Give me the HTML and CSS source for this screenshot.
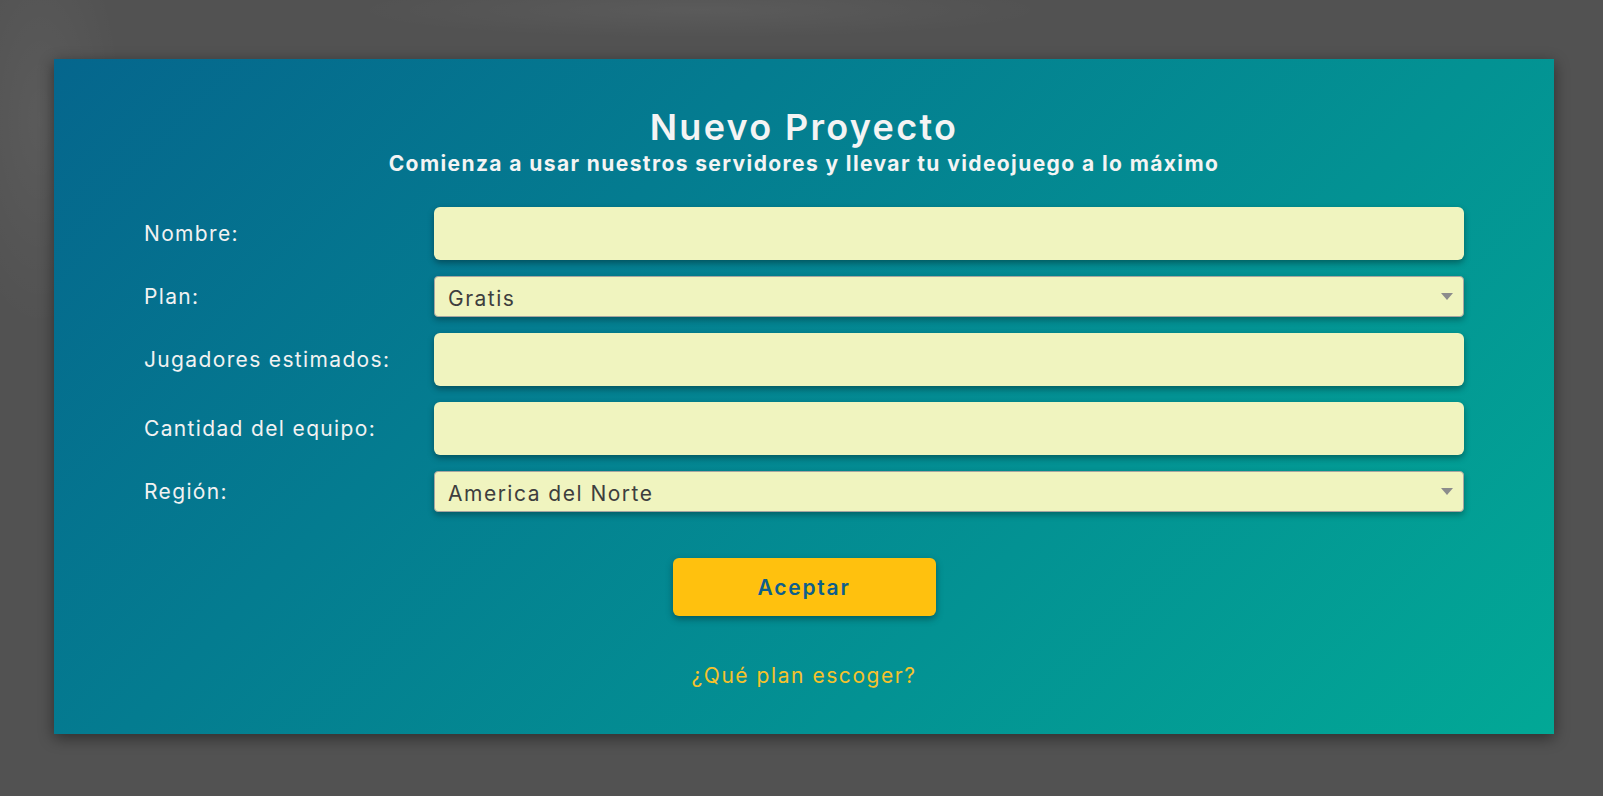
FILE: index.html
```html
<!DOCTYPE html>
<html lang="es">
<head>
<meta charset="utf-8">
<title>Nuevo Proyecto</title>
<link rel="stylesheet" href="styles.css">
</head>
<body>
<main class="page">
  <section class="card">
    <header class="card-head">
      <h1 class="title">Nuevo Proyecto</h1>
      <p class="subtitle">Comienza a usar nuestros servidores y llevar tu videojuego a lo máximo</p>
    </header>
    <form class="form">
      <div class="row">
        <label class="label" for="nombre">Nombre:</label>
        <input class="field" id="nombre" type="text">
      </div>
      <div class="row">
        <label class="label" for="plan">Plan:</label>
        <div class="select-wrap">
          <select class="select" id="plan">
            <option>Gratis</option>
          </select>
        </div>
      </div>
      <div class="row">
        <label class="label" for="jugadores">Jugadores estimados:</label>
        <input class="field" id="jugadores" type="text">
      </div>
      <div class="row">
        <label class="label" for="equipo">Cantidad del equipo:</label>
        <input class="field" id="equipo" type="text">
      </div>
      <div class="row">
        <label class="label" for="region">Región:</label>
        <div class="select-wrap">
          <select class="select" id="region">
            <option>America del Norte</option>
          </select>
        </div>
      </div>
      <div class="actions">
        <button class="btn" type="button">Aceptar</button>
      </div>
    </form>
    <a class="help" href="#">¿Qué plan escoger?</a>
  </section>
</main>
</body>
</html>
```

FILE: styles.css
```css
* { box-sizing: border-box; }

html, body {
  margin: 0;
  padding: 0;
}

body {
  font-family: "Inter", "Open Sans", sans-serif;
  background: #525252;
  min-height: 796px;
}

.page {
  min-height: 796px;
  padding-top: 59px;
  background:
    radial-gradient(ellipse 120px 300px at 40px 120px, rgba(255,255,255,0.05), rgba(255,255,255,0) 70%),
    radial-gradient(ellipse 500px 40px at 700px 10px, rgba(255,255,255,0.05), rgba(255,255,255,0) 70%),
    #525252;
}

.card {
  width: 1500px;
  height: 675px;
  margin: 0 0 0 54px;
  padding: 46px 90px 0;
  background: linear-gradient(134deg, #05668d 0%, #02a896 100%);
  box-shadow: 0 4px 14px rgba(0, 0, 0, 0.45);
  display: flex;
  flex-direction: column;
  align-items: stretch;
}

.card-head {
  text-align: center;
  color: #f4f4f4;
}

.title {
  margin: 0;
  font-size: 36px;
  line-height: 44px;
  font-weight: 600;
  letter-spacing: 2.3px;
}

.subtitle {
  margin: 3px 0 0;
  font-size: 21px;
  line-height: 24px;
  font-weight: 700;
  letter-spacing: 1.4px;
}

.form {
  margin-top: 31px;
  display: flex;
  flex-direction: column;
  gap: 16px;
}

.row {
  display: flex;
  align-items: center;
}

.label {
  width: 290px;
  flex: none;
  color: #f2f2f2;
  font-size: 21px;
  letter-spacing: 1.35px;
}

.field {
  flex: 1;
  height: 53px;
  border: none;
  border-radius: 6px;
  background: #f0f4bf;
  box-shadow: 0 3px 6px rgba(0, 0, 0, 0.35);
  font-family: inherit;
  font-size: 21px;
  padding: 0 14px;
  outline: none;
}

.select-wrap {
  flex: 1;
  position: relative;
}

.select-wrap::after {
  content: "";
  position: absolute;
  right: 11px;
  top: 17px;
  border-left: 6px solid transparent;
  border-right: 6px solid transparent;
  border-top: 7px solid #8c8c8c;
  pointer-events: none;
}

.select {
  width: 100%;
  height: 41px;
  appearance: none;
  -webkit-appearance: none;
  border: 1px solid #a6a6a0;
  border-radius: 4px;
  background: #f0f4bf;
  box-shadow: 0 3px 6px rgba(0, 0, 0, 0.3);
  font-family: inherit;
  font-size: 21px;
  letter-spacing: 1.5px;
  color: #3e3e3e;
  padding: 4px 13px 0;
  outline: none;
}

.actions {
  margin-top: 30px;
  display: flex;
  justify-content: center;
}

.btn {
  width: 263px;
  height: 58px;
  border: none;
  border-radius: 6px;
  background: #ffc10e;
  color: #0d5f8c;
  font-family: inherit;
  font-size: 21px;
  font-weight: 600;
  letter-spacing: 1.8px;
  box-shadow: 0 3px 7px rgba(0, 0, 0, 0.35);
  cursor: pointer;
}

.help {
  align-self: center;
  margin-top: 47px;
  color: #f6c22c;
  font-size: 21px;
  line-height: 26px;
  letter-spacing: 1.55px;
  text-decoration: none;
}
```
